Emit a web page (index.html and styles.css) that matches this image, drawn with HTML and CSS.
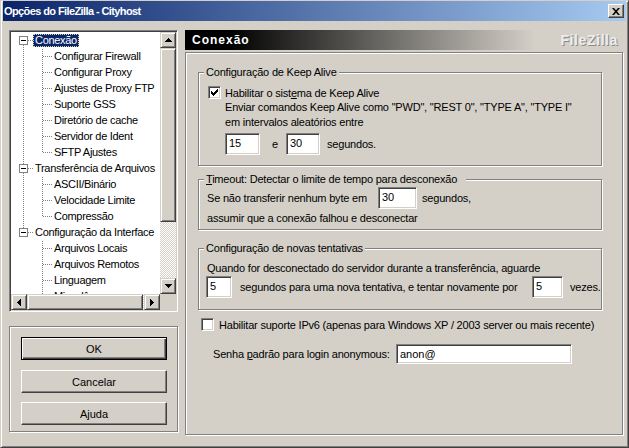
FILE: index.html
```html
<!DOCTYPE html>
<html lang="pt">
<head>
<meta charset="utf-8">
<title>Opções do FileZilla - Cityhost</title>
<link rel="stylesheet" href="styles.css">
</head>
<body>
<div class="window">
  <div class="titlebar">
    <span class="title">Opções do FileZilla - Cityhost</span>
    <button class="close" aria-label="Fechar"><svg width="8" height="7" viewBox="0 0 8 7"><path d="M0 0h2l2 2.3L6 0h2L5 3.5 8 7H6L4 4.7 2 7H0l3-3.5z" fill="#000"/></svg></button>
  </div>
  <div class="client">
    <div class="leftcol">
      <div class="tree">
        <div class="tree-list">
          <div class="row"><span class="g r-first"><span class="exp"></span></span><span class="lbl sel">Conexão</span></div>
          <div class="row"><span class="gv cont"></span><span class="g c-mid"></span><span class="lbl">Configurar Firewall</span></div>
          <div class="row"><span class="gv cont"></span><span class="g c-mid"></span><span class="lbl">Configurar Proxy</span></div>
          <div class="row"><span class="gv cont"></span><span class="g c-mid"></span><span class="lbl">Ajustes de Proxy FTP</span></div>
          <div class="row"><span class="gv cont"></span><span class="g c-mid"></span><span class="lbl">Suporte GSS</span></div>
          <div class="row"><span class="gv cont"></span><span class="g c-mid"></span><span class="lbl">Diretório de cache</span></div>
          <div class="row"><span class="gv cont"></span><span class="g c-mid"></span><span class="lbl">Servidor de Ident</span></div>
          <div class="row"><span class="gv cont"></span><span class="g c-last"></span><span class="lbl">SFTP Ajustes</span></div>
          <div class="row"><span class="g r-mid"><span class="exp"></span></span><span class="lbl">Transferência de Arquivos</span></div>
          <div class="row"><span class="gv cont"></span><span class="g c-mid"></span><span class="lbl">ASCII/Binário</span></div>
          <div class="row"><span class="gv cont"></span><span class="g c-mid"></span><span class="lbl">Velocidade Limite</span></div>
          <div class="row"><span class="gv cont"></span><span class="g c-last"></span><span class="lbl">Compressão</span></div>
          <div class="row"><span class="g r-last"><span class="exp"></span></span><span class="lbl">Configuração da Interface</span></div>
          <div class="row"><span class="gv"></span><span class="g c-mid"></span><span class="lbl">Arquivos Locais</span></div>
          <div class="row"><span class="gv"></span><span class="g c-mid"></span><span class="lbl">Arquivos Remotos</span></div>
          <div class="row"><span class="gv"></span><span class="g c-mid"></span><span class="lbl">Linguagem</span></div>
          <div class="row"><span class="gv"></span><span class="g c-mid"></span><span class="lbl">Miscelâneos</span></div>
        </div>
        <div class="vscroll">
          <div class="sbtn"><svg width="7" height="4" viewBox="0 0 7 4"><path d="M3 0h1v1h1v1h1v1h1v1H0V3h1V2h1V1h1z" fill="#000"/></svg></div>
          <div class="thumb vthumb"></div>
          <div class="track"></div>
          <div class="sbtn"><svg width="7" height="4" viewBox="0 0 7 4"><path d="M0 0h7v1H6v1H5v1H4v1H3V3H2V2H1V1H0z" fill="#000"/></svg></div>
        </div>
        <div class="hscroll">
          <div class="sbtn"><svg width="4" height="7" viewBox="0 0 4 7"><path d="M4 0v7H3V6H2V5H1V4H0V3h1V2h1V1h1V0z" fill="#000"/></svg></div>
          <div class="thumb hthumb"></div>
          <div class="track"></div>
          <div class="sbtn"><svg width="4" height="7" viewBox="0 0 4 7"><path d="M0 0h1v1h1v1h1v1h1v1H3v1H2v1H1v1H0z" fill="#000"/></svg></div>
        </div>
        <div class="corner"></div>
      </div>
      <div class="buttons">
        <button class="btn default">OK</button>
        <button class="btn">Cancelar</button>
        <button class="btn">Ajuda</button>
      </div>
    </div>
    <div class="rightcol">
      <div class="header"><span class="h-title">Conexão</span><span class="h-brand">FileZilla</span></div>
      <div class="page">
        <fieldset class="group g1">
          <legend>Configuração de Keep Alive</legend>
          <div class="g1-body">
            <div class="check-row">
              <span class="cb"><svg width="7" height="7" viewBox="0 0 7 7"><path d="M0 2h1v1h1v1h1V3h1V2h1V1h1V0h1v3H6v1H5v1H4v1H3v1H2V6H1V5H0z" fill="#000"/></svg></span>
              <span>Habilitar o sist<u>e</u>ma de Keep Alive</span>
            </div>
            <div class="kl-text">Enviar comandos Keep Alive como "PWD", "REST 0", "TYPE A", "TYPE I"<br>em intervalos aleatórios entre</div>
            <div class="kl-inputs">
              <input class="edit w35" type="text" value="15" readonly>
              <span class="kl-e">e</span>
              <input class="edit w34" type="text" value="30" readonly>
              <span class="kl-sec">segundos.</span>
            </div>
          </div>
        </fieldset>
        <fieldset class="group g2">
          <legend class="wide"><u>T</u>imeout: Detectar o limite de tempo para desconexão</legend>
          <div class="g2-body">
            <div class="to-row">
              <span class="to-label">Se não transferir nenhum byte em</span>
              <input class="edit w39" type="text" value="30" readonly>
              <span class="to-sec">segundos,</span>
            </div>
            <div class="to-text">assumir que a conexão falhou e desconectar</div>
          </div>
        </fieldset>
        <fieldset class="group g3">
          <legend>Configuração de novas tentativas</legend>
          <div class="g3-body">
            <div class="rt-text">Quando for desconectado do servidor durante a transferência, aguarde</div>
            <div class="rt-row">
              <input class="edit w26" type="text" value="5" readonly>
              <span class="rt-label">segundos para uma nova tentativa, e tentar novamente por</span>
              <input class="edit w31" type="text" value="5" readonly>
              <span class="rt-vezes">vezes.</span>
            </div>
          </div>
        </fieldset>
        <div class="check-row ipv6">
          <span class="cb"></span>
          <span>Habilitar suporte IPv6 (apenas para Windows XP / 2003 server ou mais recente)</span>
        </div>
        <div class="anon-row">
          <span class="anon-label">Senha <u>p</u>adrão para login anonymous:</span>
          <input class="edit anon" type="text" value="anon@" readonly>
        </div>
      </div>
    </div>
  </div>
</div>
</body>
</html>
```
FILE: styles.css
```css
* { box-sizing: border-box; }
html, body { margin: 0; padding: 0; }
body {
  width: 629px;
  height: 448px;
  overflow: hidden;
  background: #D4D0C8;
  font-family: "Liberation Sans", Arial, sans-serif;
  font-size: 11px;
  color: #000;
}

.window {
  width: 629px;
  height: 448px;
  background: #D4D0C8;
  border: 1px solid;
  border-color: #D4D0C8 #404040 #404040 #D4D0C8;
  box-shadow: inset 1px 1px #fff, inset -1px -1px #808080;
  padding: 0 2px 2px 2px;
  display: flex;
  flex-direction: column;
}

.titlebar {
  height: 20px;
  flex: none;
  display: flex;
  align-items: center;
  justify-content: space-between;
  background: linear-gradient(to right, #0A246A, #A6CAF0);
  padding: 0 2px 0 1px;
  margin-bottom: 1px;
}
.title {
  color: #fff;
  font-weight: bold;
  font-size: 11px;
  letter-spacing: -0.6px;
  white-space: nowrap;
}
.close {
  width: 16px;
  height: 14px;
  padding: 0;
  margin: 0;
  border: 1px solid;
  border-color: #fff #404040 #404040 #fff;
  box-shadow: inset -1px -1px #808080;
  background: #D4D0C8;
  display: flex;
  align-items: center;
  justify-content: center;
}

.client {
  flex: 1;
  display: flex;
  gap: 7px;
  padding: 8px 0 0 6px;
}

.leftcol {
  width: 169px;
  flex: none;
  display: flex;
  flex-direction: column;
}

/* Tree view */
.tree {
  height: 282px;
  border: 1px solid;
  border-color: #808080 #fff #fff #808080;
  box-shadow: inset 1px 1px #404040, inset -1px -1px #D4D0C8;
  padding: 1px;
  background: #fff;
  display: grid;
  grid-template-columns: 149px 16px;
  grid-template-rows: 262px 16px;
}
.tree-list {
  overflow: hidden;
  padding-top: 1px;
  background: #fff;
  letter-spacing: -0.3px;
}
.row {
  height: 16px;
  display: flex;
  align-items: flex-start;
  white-space: nowrap;
}
.g { width: 22px; height: 16px; flex: none; display: flex; align-items: flex-start; }
.gv { width: 19px; height: 16px; flex: none; }

.gv.cont {
  background: repeating-linear-gradient(to bottom, #808080 0 1px, transparent 1px 2px) 12px 0 / 1px 16px no-repeat;
}
.c-mid {
  background:
    repeating-linear-gradient(to right, #808080 0 1px, transparent 1px 2px) 13px 7px / 9px 1px no-repeat,
    repeating-linear-gradient(to bottom, #808080 0 1px, transparent 1px 2px) 12px 0 / 1px 16px no-repeat;
}
.c-last {
  background:
    repeating-linear-gradient(to right, #808080 0 1px, transparent 1px 2px) 13px 7px / 9px 1px no-repeat,
    repeating-linear-gradient(to bottom, #808080 0 1px, transparent 1px 2px) 12px 0 / 1px 8px no-repeat;
}
.r-first {
  background:
    repeating-linear-gradient(to right, #808080 0 1px, transparent 1px 2px) 17px 7px / 5px 1px no-repeat,
    repeating-linear-gradient(to bottom, #808080 0 1px, transparent 1px 2px) 12px 8px / 1px 8px no-repeat;
}
.r-mid {
  background:
    repeating-linear-gradient(to right, #808080 0 1px, transparent 1px 2px) 17px 7px / 5px 1px no-repeat,
    repeating-linear-gradient(to bottom, #808080 0 1px, transparent 1px 2px) 12px 0 / 1px 16px no-repeat;
}
.r-last {
  background:
    repeating-linear-gradient(to right, #808080 0 1px, transparent 1px 2px) 17px 7px / 5px 1px no-repeat,
    repeating-linear-gradient(to bottom, #808080 0 1px, transparent 1px 2px) 12px 0 / 1px 8px no-repeat;
}
.exp {
  width: 9px;
  height: 9px;
  margin: 3px 0 0 8px;
  border: 1px solid #808080;
  background: linear-gradient(#000, #000) center / 5px 1px no-repeat, #fff;
}
.lbl {
  height: 13px;
  line-height: 13px;
  margin-top: 1px;
  padding: 0 2px;
}
.sel {
  background: #0A246A;
  color: #fff;
  outline: 1px dotted #d8d89a;
  outline-offset: -1px;
}

/* Scrollbars */
.vscroll { display: flex; flex-direction: column; }
.hscroll { display: flex; flex-direction: row; }
.sbtn, .thumb {
  background: #D4D0C8;
  border: 1px solid;
  border-color: #D4D0C8 #404040 #404040 #D4D0C8;
  box-shadow: inset 1px 1px #fff, inset -1px -1px #808080;
}
.sbtn {
  width: 16px;
  height: 16px;
  flex: none;
  display: flex;
  align-items: center;
  justify-content: center;
}
.sbtn svg { display: block; }
.vthumb { height: 174px; flex: none; }
.hthumb { width: 116px; flex: none; }
.track {
  flex: 1;
  background: repeating-conic-gradient(#D4D0C8 0 25%, #fff 0 50%) 0 0 / 2px 2px;
}
.corner { background: #D4D0C8; }

/* Buttons frame */
.buttons {
  margin-top: 14px;
  height: 106px;
  border: 1px solid #808080;
  box-shadow: inset 1px 1px #fff, 1px 1px #fff;
  padding: 10px 0 0 11px;
  display: flex;
  flex-direction: column;
  gap: 9px;
}
.btn {
  width: 146px;
  height: 23px;
  margin: 0;
  padding: 0;
  font-family: inherit;
  font-size: 11px;
  color: #000;
  background: #D4D0C8;
  border: 1px solid;
  border-color: #fff #404040 #404040 #fff;
  box-shadow: inset -1px -1px #808080;
}
.btn.default {
  border: 1px solid #000;
  box-shadow: inset 1px 1px #fff, inset -1px -1px #404040, inset -2px -2px #808080;
  margin-bottom: 1px;
}

/* Right column */
.rightcol {
  width: 438px;
  flex: none;
  display: flex;
  flex-direction: column;
}
.header {
  height: 20px;
  flex: none;
  display: flex;
  align-items: center;
  justify-content: space-between;
  padding: 0 5px 0 7px;
  background: linear-gradient(to right, #000 10%, #D4D0C8 80%);
}
.h-title {
  color: #fff;
  font-weight: bold;
  font-size: 12px;
  letter-spacing: 1px;
}
.h-brand {
  color: #EDEDED;
  font-weight: bold;
  font-size: 14px;
  letter-spacing: 0.6px;
  text-shadow: 1px 1px #8a8a8a;
}

.page {
  margin-top: 2px;
  height: 383px;
  border: 1px solid #808080;
  box-shadow: inset 1px 1px #fff, 1px 1px #fff;
  padding: 13px 0 0 12px;
  letter-spacing: -0.2px;
}

.group {
  width: 404px;
  margin: 0;
  padding: 0;
  min-width: 0;
  border: 1px solid #808080;
  box-shadow: inset 1px 1px #fff, 1px 1px #fff;
}
.group legend {
  margin-left: 5px;
  padding: 0 2px;
  height: 13px;
  line-height: 13px;
  background: #D4D0C8;
  white-space: nowrap;
}
.group legend.wide { padding-right: 9px; }
.g2 { margin-top: 7px; }
.g3 { margin-top: 12px; }

.edit {
  height: 22px;
  margin: 0;
  padding: 0 3px 2px 3px;
  font-family: inherit;
  font-size: 11px;
  color: #000;
  background: #fff;
  border: 1px solid;
  border-color: #808080 #fff #fff #808080;
  box-shadow: inset 1px 1px #404040, inset -1px -1px #D4D0C8;
  outline: none;
  flex: none;
}
.w35 { width: 35px; }
.w34 { width: 34px; }
.w39 { width: 39px; }
.w26 { width: 26px; }
.w31 { width: 31px; }

.check-row {
  height: 13px;
  display: flex;
  align-items: center;
  gap: 4px;
  white-space: nowrap;
}
.cb {
  width: 13px;
  height: 13px;
  flex: none;
  border: 1px solid;
  border-color: #808080 #fff #fff #808080;
  box-shadow: inset 1px 1px #404040, inset -1px -1px #D4D0C8;
  background: #fff;
  display: flex;
  align-items: center;
  justify-content: center;
}
.cb svg { display: block; }

.g1-body { padding: 7px 0 10px 9px; }
.kl-text {
  margin: 1px 0 0 17px;
  line-height: 15px;
  white-space: nowrap;
}
.kl-inputs {
  margin-top: 3px;
  display: flex;
  align-items: center;
}
.kl-inputs .w35 { margin-left: 17px; }
.kl-e { margin-left: 12px; width: 14px; }
.kl-sec { margin-left: 7px; }

.g2-body { padding: 1px 0 4px 8px; }
.to-row { display: flex; align-items: center; height: 22px; }
.to-label { width: 171px; white-space: nowrap; }
.to-sec { margin-left: 5px; }
.to-text { margin-top: 2px; line-height: 14px; white-space: nowrap; }

.g3-body { padding: 6px 0 11px 7px; }
.rt-text { margin-left: 1px; line-height: 14px; white-space: nowrap; }
.rt-row { margin-top: 1px; display: flex; align-items: center; height: 22px; }
.rt-label { margin-left: 8px; width: 292px; white-space: nowrap; }
.rt-vezes { margin-left: 7px; }

.ipv6 { margin: 8px 0 0 3px; gap: 5px; }

.anon-row {
  margin: 13px 0 0 15px;
  display: flex;
  align-items: center;
  height: 20px;
}
.anon-label { width: 183px; white-space: nowrap; }
.edit.anon { width: 176px; height: 20px; padding-bottom: 0; }
```
